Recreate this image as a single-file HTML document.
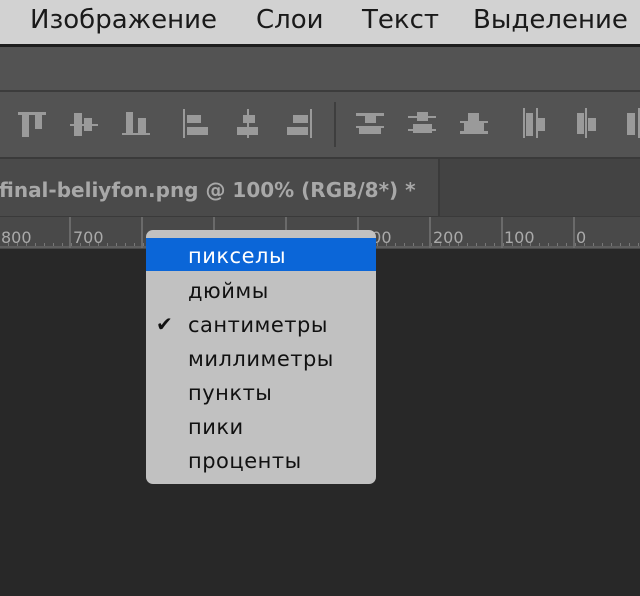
<html><head><style>
body{margin:0;width:640px;height:596px;overflow:hidden;background:#282828;font-family:"Liberation Sans","DejaVu Sans",sans-serif;position:relative}
div{position:absolute}
.i{background:#9a9a9a}
.m{left:146px;width:230px;top:230px;height:254px;background:#c1c1c1;border-radius:7px}
.it{position:absolute;left:42px;font-size:21px;letter-spacing:0.5px;color:#111;line-height:34px;font-family:"DejaVu Sans",sans-serif;white-space:nowrap}
.t{position:absolute;top:0;font-size:16px;color:#aaa;font-family:"DejaVu Sans",sans-serif;line-height:20px}
.k{top:217px;width:2px;height:31px;background:#6a6a6a}
</style></head><body>
<div style="left:0;top:0;width:640px;height:44px;background:#d2d2d2"></div>
<div style="left:0;top:44px;width:640px;height:3px;background:#1e1e1e"></div>
<div style="left:0;top:5px;font-size:26px;color:#1a1a1a;font-family:'DejaVu Sans',sans-serif"><span style="position:absolute;left:30px;white-space:nowrap">Изображение</span><span style="position:absolute;left:256px">Слои</span><span style="position:absolute;left:362px">Текст</span><span style="position:absolute;left:473px;white-space:nowrap">Выделение</span></div>
<div style="left:0;top:47px;width:640px;height:43px;background:#535353"></div>
<div style="left:0;top:90px;width:640px;height:2px;background:#3c3c3c"></div>
<div style="left:0;top:92px;width:640px;height:65px;background:#535353"></div>
<div style="left:334px;top:102px;width:2px;height:45px;background:#3e3e3e"></div>
<!-- 1 -->
<div class="i" style="left:18px;top:112px;width:28px;height:3px"></div><div class="i" style="left:22px;top:115px;width:7px;height:22px"></div><div class="i" style="left:35px;top:115px;width:7px;height:14px"></div>
<!-- 2 -->
<div class="i" style="left:70px;top:124px;width:28px;height:2px"></div><div class="i" style="left:74px;top:113px;width:8px;height:23px"></div><div class="i" style="left:84px;top:118px;width:8px;height:13px"></div>
<!-- 3 -->
<div class="i" style="left:122px;top:133px;width:28px;height:2px"></div><div class="i" style="left:126px;top:112px;width:7px;height:21px"></div><div class="i" style="left:138px;top:118px;width:8px;height:15px"></div>
<!-- 4 -->
<div class="i" style="left:183px;top:109px;width:2px;height:29px"></div><div class="i" style="left:187px;top:115px;width:14px;height:8px"></div><div class="i" style="left:187px;top:127px;width:21px;height:8px"></div>
<!-- 5 -->
<div class="i" style="left:247px;top:109px;width:2px;height:29px"></div><div class="i" style="left:243px;top:115px;width:12px;height:8px"></div><div class="i" style="left:237px;top:127px;width:21px;height:8px"></div>
<!-- 6 -->
<div class="i" style="left:310px;top:109px;width:2px;height:29px"></div><div class="i" style="left:293px;top:115px;width:15px;height:8px"></div><div class="i" style="left:287px;top:127px;width:21px;height:8px"></div>
<!-- 7 -->
<div class="i" style="left:356px;top:113px;width:28px;height:3px"></div><div class="i" style="left:365px;top:116px;width:11px;height:7px"></div><div class="i" style="left:356px;top:126px;width:28px;height:2px"></div><div class="i" style="left:359px;top:128px;width:22px;height:6px"></div>
<!-- 8 -->
<div class="i" style="left:408px;top:116px;width:28px;height:2px"></div><div class="i" style="left:417px;top:112px;width:11px;height:9px"></div><div class="i" style="left:408px;top:129px;width:28px;height:2px"></div><div class="i" style="left:413px;top:124px;width:19px;height:9px"></div>
<!-- 9 -->
<div class="i" style="left:460px;top:131px;width:28px;height:3px"></div><div class="i" style="left:468px;top:113px;width:11px;height:8px"></div><div class="i" style="left:460px;top:121px;width:28px;height:2px"></div><div class="i" style="left:464px;top:123px;width:20px;height:8px"></div>
<!-- 10 -->
<div class="i" style="left:523px;top:108px;width:2px;height:30px"></div><div class="i" style="left:526px;top:113px;width:7px;height:23px"></div><div class="i" style="left:536px;top:108px;width:2px;height:30px"></div><div class="i" style="left:538px;top:118px;width:7px;height:13px"></div>
<!-- 11 -->
<div class="i" style="left:577px;top:113px;width:7px;height:21px"></div><div class="i" style="left:585px;top:108px;width:2px;height:30px"></div><div class="i" style="left:588px;top:118px;width:8px;height:13px"></div>
<!-- 12 -->
<div class="i" style="left:627px;top:113px;width:8px;height:22px"></div><div class="i" style="left:638px;top:108px;width:2px;height:30px"></div>
<div style="left:0;top:157px;width:640px;height:2px;background:#3a3a3a"></div>
<div style="left:0;top:159px;width:438px;height:57px;background:#4a4a4a"></div>
<div style="left:438px;top:159px;width:2px;height:57px;background:#3a3a3a"></div>
<div style="left:440px;top:159px;width:200px;height:57px;background:#434343"></div>
<div style="left:-1px;top:178px;font-size:20px;line-height:24px;font-weight:bold;color:#a8a8a8;white-space:nowrap;font-family:'DejaVu Sans',sans-serif">final-beliyfon.png @ 100% (RGB/8*) *</div>
<div style="left:0;top:216px;width:640px;height:32px;background:#494949;border-top:1px solid #3a3a3a"></div>
<div style="left:0;top:243px;width:640px;height:4px;background:repeating-linear-gradient(90deg,transparent 0,transparent 8px,#777 8px,#777 9px)"></div>
<div style="left:0;top:246px;width:640px;height:2px;background:#5e5e5e"></div>
<div style="left:0;top:228px;width:640px;height:20px">
<span class="t" style="left:1px">800</span><span class="t" style="left:73px">700</span><span class="t" style="left:361px">300</span><span class="t" style="left:433px">200</span><span class="t" style="left:504px">100</span><span class="t" style="left:576px">0</span></div>
<div class="k" style="left:69px"></div><div class="k" style="left:141px"></div><div class="k" style="left:213px"></div><div class="k" style="left:285px"></div><div class="k" style="left:357px"></div><div class="k" style="left:429px"></div><div class="k" style="left:501px"></div><div class="k" style="left:573px"></div>
<div class="m">
<div style="left:0;top:8px;width:230px;height:33px;background:#0b66d8"></div>
<div class="it" style="top:9px;color:#fff">пикселы</div>
<div class="it" style="top:44px">дюймы</div>
<div class="it" style="top:78px">сантиметры</div>
<div style="left:10px;top:78px;font-size:20px;line-height:34px;color:#111">✔</div>
<div class="it" style="top:112px">миллиметры</div>
<div class="it" style="top:146px">пункты</div>
<div class="it" style="top:180px">пики</div>
<div class="it" style="top:214px">проценты</div>
</div>
</body></html>
